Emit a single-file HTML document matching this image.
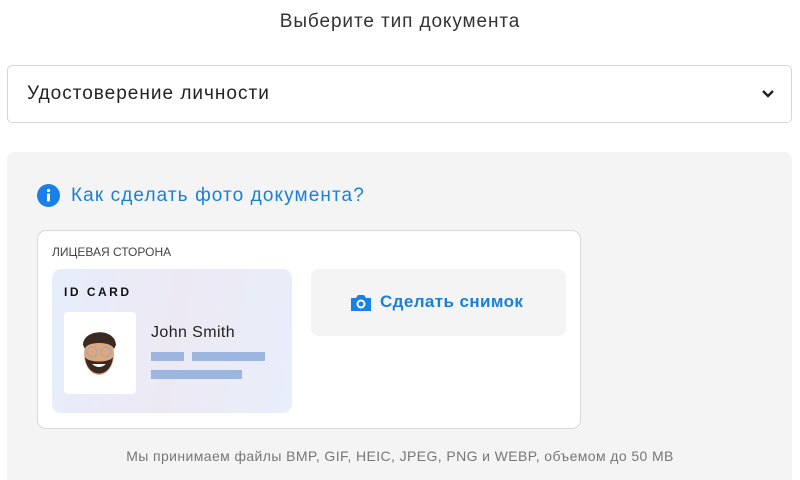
<!DOCTYPE html>
<html><head><meta charset="utf-8"><style>
*{margin:0;padding:0;box-sizing:border-box}
html,body{width:800px;height:480px;overflow:hidden}
body{background:#fff;font-family:"Liberation Sans","DejaVu Sans",sans-serif;position:relative;color:#222}
.a{position:absolute}
</style></head><body>
<div class="a" style="left:0;top:11px;width:800px;text-align:center;font-size:19px;letter-spacing:0.9px;color:#333">Выберите тип документа</div>
<div class="a" style="left:7px;top:65px;width:785px;height:58px;border:1px solid #d6d6d6;border-radius:5px;"></div>
<div class="a" style="left:27px;top:83px;font-size:19px;letter-spacing:1px;color:#222">Удостоверение личности</div>
<svg class="a" style="left:760px;top:88px" width="16" height="12" viewBox="0 0 16 12"><path d="M3 3l5 5 5-5" fill="none" stroke="#222" stroke-width="2.4"/></svg>
<div class="a" style="left:7px;top:152px;width:785px;height:328px;background:#f4f4f4;border-radius:8px 8px 0 0"></div>
<svg class="a" style="left:37px;top:184px" width="23" height="23" viewBox="0 0 23 23"><circle cx="11.5" cy="11.5" r="11.5" fill="#1a80e5"/><circle cx="11.5" cy="6.5" r="1.6" fill="#fff"/><rect x="10" y="9.5" width="3" height="8" rx="1" fill="#fff"/></svg>
<div class="a" style="left:71px;top:185px;font-size:19px;letter-spacing:1.1px;color:#1a7fd8">Как сделать фото документа?</div>
<div class="a" style="left:37px;top:230px;width:544px;height:199px;background:#fff;border:1px solid #d8d8d8;border-radius:9px"></div>
<div class="a" style="left:52px;top:245px;font-size:12px;color:#444">ЛИЦЕВАЯ СТОРОНА</div>
<div class="a" style="left:52px;top:269px;width:240px;height:144px;border-radius:9px;background:linear-gradient(100deg,#e6eefb,#ede9f4 50%,#e8eefa)"></div>
<div class="a" style="left:64px;top:285px;font-size:12px;font-weight:bold;letter-spacing:2.5px;color:#111">ID CARD</div>
<div class="a" style="left:64px;top:312px;width:72px;height:82px;background:#fff;border-radius:4px"></div>
<svg class="a" style="left:78px;top:323px" width="42" height="58" viewBox="0 0 42 58"><ellipse cx="21" cy="31" rx="15" ry="21" fill="#e2a67c"/><path d="M5 22c0-16 32-18 33 0l-2 4c-2-8-28-8-29 0z" fill="#3a2a22"/><path d="M7 34c2 22 26 22 28 0c-3 6-25 6-28 0z" fill="#3a2a22"/><circle cx="14" cy="29" r="5" fill="none" stroke="#aaa" stroke-width="1.5"/><circle cx="28" cy="29" r="5" fill="none" stroke="#aaa" stroke-width="1.5"/><path d="M14 41q7 6 14 0z" fill="#fff"/></svg>
<div class="a" style="left:151px;top:324px;font-size:16px;letter-spacing:0.4px;color:#222">John Smith</div>
<div class="a" style="left:151px;top:352px;width:33px;height:9px;background:#9db6df"></div>
<div class="a" style="left:192px;top:352px;width:73px;height:9px;background:#9db6df"></div>
<div class="a" style="left:151px;top:370px;width:91px;height:9px;background:#9db6df"></div>
<div class="a" style="left:311px;top:269px;width:255px;height:67px;background:#f4f4f5;border-radius:8px"></div>
<svg class="a" style="left:351px;top:294px" width="20" height="17" viewBox="0 0 20 17"><path d="M0 4h5l2-3h6l2 3h5v13H0z" fill="#1a80e5"/><circle cx="10" cy="10" r="3.5" fill="none" stroke="#fff" stroke-width="2"/></svg>
<div class="a" style="left:380px;top:292px;font-size:17px;font-weight:bold;letter-spacing:0.4px;color:#1a7fd8">Сделать снимок</div>
<div class="a" style="left:0;top:448px;width:800px;text-align:center;font-size:14px;letter-spacing:0.4px;color:#777">Мы принимаем файлы BMP, GIF, HEIC, JPEG, PNG и WEBP, объемом до 50 MB</div>
</body></html>
